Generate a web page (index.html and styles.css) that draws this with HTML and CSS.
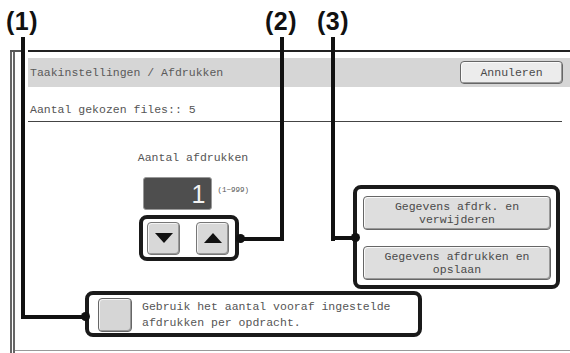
FILE: index.html
```html
<html>
  <head>
    <link rel="stylesheet" href="styles.css">
  </head>
  <body>
    <div class="page">
      <div class="bezel">
        <div class="screen">
          <div class="titlebar">
            <span class="title">Taakinstellingen / Afdrukken</span>
            <button class="btn cancel">Annuleren</button>
          </div>
          <div class="files">Aantal gekozen files:: 5</div>
          <div class="content">
            <div class="top">
              <div class="counter">
                <div class="counter-label">Aantal afdrukken</div>
                <div class="count-row">
                  <span></span>
                  <div class="count">1</div>
                  <span class="range">(1~999)</span>
                </div>
                <div class="arrows box">
                  <button class="arrow">
                    <svg width="20" height="12" viewBox="0 0 20 12"><polygon points="1,1 19,1 10,11" fill="#111"/></svg>
                  </button>
                  <button class="arrow">
                    <svg width="20" height="12" viewBox="0 0 20 12"><polygon points="1,11 19,11 10,1" fill="#111"/></svg>
                  </button>
                </div>
              </div>
              <div class="actions box">
                <button class="btn action">Gegevens afdrk. en<br>verwijderen</button>
                <button class="btn action">Gegevens afdrukken en<br>opslaan</button>
              </div>
            </div>
            <div class="preset box">
              <div class="check"></div>
              <div class="preset-text">Gebruik het aantal vooraf ingestelde<br>afdrukken per opdracht.</div>
            </div>
          </div>
        </div>
        <div class="baseline"></div>
      </div>
    </div>

    <!-- callout annotations -->
    <div class="label l1">(1)</div>
    <div class="label l2">(2)</div>
    <div class="label l3">(3)</div>
    <div class="line v1"></div>
    <div class="line h1"></div>
    <div class="dot d1"></div>
    <div class="line v2"></div>
    <div class="line h2"></div>
    <div class="dot d2"></div>
    <div class="line v3"></div>
    <div class="line h3"></div>
    <div class="dot d3"></div>
  </body>
</html>
```

FILE: styles.css
```css
*{
  margin: 0;
  padding: 0;
  box-sizing: border-box;
}
body{
  width: 570px;
  height: 353px;
  overflow: hidden;
  position: relative;
  background: #fff;
  font-family: "Liberation Mono", monospace;
  font-size: 11.5px;
  color: #555;
}
.page{
  padding: 50px 0 0 10px;
}
.bezel{
  position: relative;
  border-left: 5px double #666;
  height: 303px;
}
.bezel::before{
  content: "";
  position: absolute;
  top: 0;
  left: -5px;
  width: 12px;
  height: 2px;
  background: #555;
}
.screen{
  margin-left: 13px;
  border-top: 2px solid #222;
  padding-top: 6px;
}
.titlebar{
  height: 29px;
  background: #d6d6d6;
  display: flex;
  align-items: center;
  justify-content: space-between;
  padding: 0 7px 0 2px;
  color: #5a5a5a;
}
.btn{
  font-family: "Liberation Mono", monospace;
  font-size: 11.5px;
  color: #4a4a4a;
  background: #dedede;
  border: 1px solid #666;
  border-radius: 4px;
  box-shadow: inset 1px 1px 0 #fafafa, inset -1px -1px 0 #999;
}
.cancel{
  width: 103px;
  height: 23px;
  background: #ececec;
}
.files{
  height: 35px;
  padding: 16px 0 0 2px;
  line-height: 14px;
  border-bottom: 1px solid #444;
  margin-right: 8px;
}
.content{
  height: 228px;
}
.top{
  display: flex;
  align-items: flex-start;
}
.counter{
  width: 120px;
  margin-left: 101px;
  padding-top: 29px;
  display: flex;
  flex-direction: column;
  align-items: center;
}
.counter-label{
  line-height: 14px;
  padding-left: 8px;
}
.count-row{
  margin-top: 12px;
  width: 100%;
  display: grid;
  grid-template-columns: 1fr 69px 1fr;
}
.count{
  height: 33px;
  background: #4e4e4e;
  border: 1px solid #999;
  border-radius: 3px;
  color: #f2f2f2;
  font-family: "Liberation Sans", sans-serif;
  font-size: 25px;
  line-height: 33px;
  text-align: right;
  padding-right: 6px;
}
.range{
  font-size: 7.5px;
  padding: 9px 0 0 5px;
  white-space: nowrap;
}
.box{
  border: 4px solid #1a1a1a;
  border-radius: 8px;
}
.arrows{
  margin-top: 5px;
  width: 100px;
  height: 46px;
  display: flex;
  align-items: center;
  justify-content: center;
  gap: 16px;
  padding-right: 2px;
}
.arrow{
  width: 33px;
  height: 33px;
  background: #d8d8d8;
  border: 1px solid #777;
  border-radius: 4px;
  box-shadow: inset 1px 1px 0 #f4f4f4, inset -1px -1px 0 #999;
  display: flex;
  align-items: center;
  justify-content: center;
}
.actions{
  margin: 63px 0 0 104px;
  width: 207px;
  padding: 7px 5px 5px 6px;
  display: flex;
  flex-direction: column;
  gap: 16px;
}
.action{
  width: 188px;
  height: 34px;
  line-height: 13px;
  text-align: center;
}
.preset{
  margin: 2px 0 0 57px;
  width: 337px;
  height: 46px;
  display: flex;
  align-items: center;
  gap: 10px;
  padding: 2px 9px 0 9px;
}
.check{
  width: 34px;
  height: 34px;
  background: #d6d6d6;
  border: 1px solid #666;
  border-radius: 4px;
  box-shadow: inset 1px 1px 0 #f4f4f4, inset -1px -1px 0 #999;
}
.preset-text{
  line-height: 16px;
}
.baseline{
  border-top: 1px solid #999;
}

/* callouts */
.label{
  position: absolute;
  top: 7px;
  font-family: "Liberation Sans", sans-serif;
  font-weight: bold;
  font-size: 25px;
  letter-spacing: 0.5px;
  color: #111;
}
.l1{ left: 6px; }
.l2{ left: 265px; }
.l3{ left: 317px; }
.line{
  position: absolute;
  background: #111;
}
.dot{
  position: absolute;
  width: 9px;
  height: 9px;
  border-radius: 50%;
  background: #111;
}
.v1{ left: 21px; top: 37px; width: 4px; height: 282px; }
.h1{ left: 21px; top: 315px; width: 64px; height: 4px; }
.d1{ left: 81px; top: 312px; }
.v2{ left: 280px; top: 37px; width: 4px; height: 204px; }
.h2{ left: 240px; top: 237px; width: 44px; height: 4px; }
.d2{ left: 236px; top: 234px; }
.v3{ left: 331px; top: 37px; width: 4px; height: 204px; }
.h3{ left: 331px; top: 236px; width: 24px; height: 4px; }
.d3{ left: 351px; top: 233px; }
```
